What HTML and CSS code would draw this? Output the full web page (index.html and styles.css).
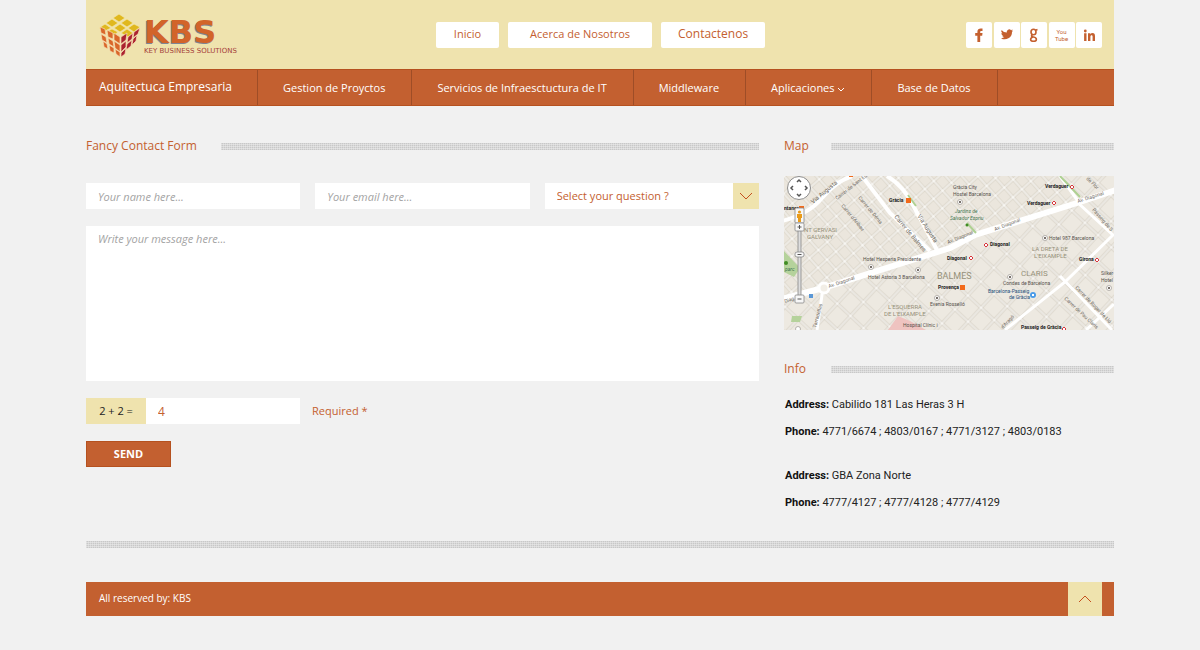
FILE: index.html
```html
<!DOCTYPE html>
<html lang="es">
<head>
<meta charset="utf-8">
<meta name="viewport" content="width=device-width, initial-scale=1">
<title>KBS - Key Business Solutions</title>
<link rel="stylesheet" href="styles.css">
</head>
<body>
<div class="page">
  <header class="header">
    <a class="logo" href="#">
      <svg class="logo-cube" viewBox="0 0 42 44" aria-hidden="true">
        <g fill="#e0b81f" stroke="#f3e6ae" stroke-width="0.7">
          <path d="M20 1l6 4-6 4-6-4zM13 6l6 4-6 4-6-4zM28 6l6 4-6 4-6-4zM6 11l6 4-6 3-6-3zM21 11l6 4-6 4-6-4zM35 11l6 3-6 5-6-4zM13 16l6 3-5 4-7-4zM28 16l6 4-5 4-7-4z"/>
        </g>
        <g fill="#d9672a" stroke="#f6dfb4" stroke-width="0.7">
          <path d="M1 14l5 2 1 6-5-2zM8 17l6 3v6l-5-2zM15 20l6 4v7l-6-4zM2 21l5 3 1 6-5-3zM9 25l5 3 1 6-5-3zM15 28l6 4v7l-5-4zM4 28l4 3 1 5-4-2zM10 32l5 3v5l-4-2zM16 36l5 3v5l-4-3z"/>
        </g>
        <g fill="#ab2230" stroke="#f6dfb4" stroke-width="0.7">
          <path d="M22 24l6-4-1 7-5 4zM29 24l5-4-1 6-5 4zM35 19l6-4-2 6-5 4zM22 32l5-4v6l-5 5zM28 31l5-4-1 6-5 4zM34 26l4-4-1 6-4 4zM22 40l5-5-1 6-4 3z"/>
        </g>
      </svg>
      <span class="logo-words">
        <span class="logo-name">KBS</span>
        <span class="logo-tag">KEY BUSINESS SOLUTIONS</span>
      </span>
    </a>
    <nav class="top-nav" aria-label="Principal">
      <a href="#">Inicio</a>
      <a href="#" class="wide">Acerca de Nosotros</a>
      <a href="#" class="current">Contactenos</a>
    </nav>
    <div class="social">
      <a href="#" aria-label="Facebook"><svg viewBox="0 0 26 26"><path d="M11.400 20v-6.300H9.200v-2.600h2.200V9.700C11.400 7.400 12.800 6.500 14.800 6.500h1.700v2.600h-1.200c-.8 0-1.100.4-1.100 1.100v.9h2.300l-.3 2.600h-2V20z"/></svg></a>
      <a href="#" aria-label="Twitter"><svg viewBox="0 0 26 26"><path d="M19 8.600a5 5 0 0 1-1.400.4 2.500 2.500 0 0 0 1-1.400 5 5 0 0 1-1.500.6 2.500 2.500 0 0 0-4.300 2.300 7 7 0 0 1-5.200-2.600 2.500 2.500 0 0 0 .8 3.300 2.500 2.500 0 0 1-1.100-.3 2.500 2.500 0 0 0 2 2.500 2.500 2.500 0 0 1-1.200 0 2.500 2.500 0 0 0 2.300 1.700A5 5 0 0 1 7 16.200a7.200 7.200 0 0 0 11-6.300 5 5 0 0 0 1-1.300z"/></svg></a>
      <a href="#" aria-label="Google"><svg class="line-icon" viewBox="0 0 26 26"><ellipse cx="12.500" cy="10" rx="2.500" ry="2.700"/><path d="M14.500 8.200l2-.7M11.500 12.500c-2 1.500-.8 2.200 1 2.500 4 .7 3.600 4.300.1 4.300-4 0-3.700-3.500-.6-4.300"/></svg></a>
      <a href="#" aria-label="YouTube" class="youtube"><span>You</span><span>Tube</span></a>
      <a href="#" aria-label="LinkedIn"><svg viewBox="0 0 26 26"><circle cx="9.300" cy="9" r="1.400"/><path d="M8.100 11.300h2.400V19H8.100zM12 11.300h2.300v1c.5-.8 1.300-1.200 2.200-1.200 1.800 0 2.500 1.200 2.500 3.200V19h-2.400v-4.300c0-1-.3-1.500-1-1.500-.8 0-1.200.6-1.200 1.600V19H12z"/></svg></a>
    </div>
  </header>

  <nav class="main-nav" aria-label="Servicios">
    <a href="#" class="lead">Aquitectuca Empresaria</a>
    <a href="#">Gestion de Proyctos</a>
    <a href="#">Servicios de Infraesctuctura de IT</a>
    <a href="#">Middleware</a>
    <a href="#">Aplicaciones <svg class="caret" viewBox="0 0 8 5" aria-hidden="true"><path d="M1 1l3 3 3-3"/></svg></a>
    <a href="#">Base de Datos</a>
  </nav>

  <main class="content">
    <section>
      <div class="title"><h2>Fancy Contact Form</h2><span class="dots"></span></div>
      <form class="form">
        <div class="fields">
          <input class="box" type="text" placeholder="Your name here..." aria-label="Your name">
          <input class="box" type="email" placeholder="Your email here..." aria-label="Your email">
          <div class="select">
            <select class="box" aria-label="Select your question"><option>Select your question ?</option></select>
            <span class="select-arrow"><svg viewBox="0 0 14 8" aria-hidden="true"><path d="M1 1l6 6 6-6"/></svg></span>
          </div>
        </div>
        <textarea class="box message" placeholder="Write your message here..." aria-label="Your message"></textarea>
        <div class="check">
          <div class="sum"><label for="sum">2 + 2 =</label><input class="box" id="sum" type="text" value="4"></div>
          <span class="required">Required *</span>
        </div>
        <button class="send" type="submit">SEND</button>
      </form>
    </section>

    <aside>
      <div class="title"><h2>Map</h2><span class="dots"></span></div>
      <svg class="map" viewBox="0 0 330 154" role="img" aria-label="Map of Barcelona">
        <defs>
          <pattern id="small" width="12" height="13" patternUnits="userSpaceOnUse" patternTransform="rotate(-42)">
            <rect width="12" height="13" fill="#fcfbf8"/><rect x="1" y="1" width="10" height="11" fill="#ebe6dd" stroke="#cbc4b7" stroke-width="0.6"/>
          </pattern>
          <pattern id="large" width="19" height="18" patternUnits="userSpaceOnUse" patternTransform="rotate(-47)">
            <rect width="19" height="18" fill="#fcfbf8"/><rect x="1" y="1" width="17" height="16" fill="#ede9e1" stroke="#cbc4b7" stroke-width="0.7"/>
          </pattern>
        </defs>
        <rect width="330" height="154" fill="url(#large)"/>
        <path d="M0 0h275l18 26L39 112 0 122z" fill="url(#small)"/>
        <path d="M0 75l16 17-6 9-10-5z" fill="#b5d29b"/>
        <path d="M8 140h10l-2 6H7z" fill="#b5d29b"/>
        <path d="M104 154l10-14 12 5 16 9z" fill="#efc3c0"/>
        <g fill="none" stroke="#fff" stroke-width="4">
          <path d="M-2 45Q25 38 38 22T68 0"/>
          <path d="M78 0l28 37 40 38"/>
          <path d="M103 0Q120 10 130 31l23 43"/>
          <path d="M39 112l-6 42M330 58l-49 48-60 48M276 100l52 54M293 26l37 34M276 0l18 25M330 128l-28 26" stroke-width="3"/>
          <path d="M-2 123l41-11L166 72l25-13L293 27l39-13" stroke-width="6"/>
        </g>
        <circle cx="40" cy="112" r="5" fill="#f2eee6" stroke="#fff" stroke-width="3"/>
        <g stroke="#aed092" stroke-width="2"><path d="M124 19l8 11M276 0l20 21M183 47l9 10"/></g>
        <g class="map-area">
          <text x="20" y="56">NT GERVASI</text><text x="23" y="63">GALVANY</text>
          <text x="104" y="133">L'ESQUERRA</text><text x="100" y="140">DE L'EIXAMPLE</text>
          <text x="248" y="75">LA DRETA DE</text><text x="250" y="82">L'EIXAMPLE</text>
          <text x="153" y="103" class="big">BALMES</text><text x="237" y="100" class="mid">CLARIS</text>
        </g>
        <g class="map-road">
          <text transform="translate(29 28) rotate(-40)">Via Augusta</text>
          <text class="minor" transform="translate(53 24) rotate(-38)">Carrer de Sant Eus</text>
          <text class="minor" transform="translate(57 30) rotate(50)">Carrer d'Aribau</text>
          <text class="minor" transform="translate(74 22) rotate(50)">Carrer de Dénia</text>
          <text transform="translate(110 41) rotate(50)">Carrer de Balmes</text>
          <text transform="translate(133 40) rotate(57)">Via Augusta</text>
          <text class="minor" transform="translate(45 112) rotate(-19)">Av. Diagonal</text>
          <text class="minor" transform="translate(164 68) rotate(-22)">Av. Diagonal</text>
          <text class="minor" transform="translate(211 55) rotate(-21)">Av. Diagonal</text>
          <text class="minor" transform="translate(294 27) rotate(-18)">Av. Diagonal</text>
          <text class="minor" transform="translate(308 34) rotate(49)">Passeig de S</text>
          <text class="minor" transform="translate(291 112) rotate(46)">Carrer de Roger de Llú</text>
          <text class="minor" transform="translate(280 123) rotate(43)">Carrer de Pau Claris</text>
          <text class="minor" transform="translate(219 153) rotate(-47)">d'Aragó</text>
          <text class="minor" transform="translate(32 152) rotate(-75)">Tarradellas</text>
          <text class="minor" transform="translate(302 3) rotate(45)">de Flor</text>
          <text class="minor" transform="translate(1 127) rotate(-18)">Diag</text>
        </g>
        <g class="map-place">
          <text x="79" y="85">Hotel Hesperia Presidente</text><text x="84" y="103">Hotel Astoria 3 Barcelona</text>
          <text x="146" y="130">Evenia Rosselló</text><text x="119" y="151">Hospital Clínic i</text>
          <text x="169" y="13">Gràcia City</text><text x="169" y="20">Hostel Barcelona</text>
          <text x="265" y="64">Hotel 987 Barcelona</text><text x="219" y="109">Condes de Barcelona</text>
          <text x="317" y="99">Silker</text><text x="317" y="106">Hotel</text>
        </g>
        <g class="map-stop">
          <text x="105" y="26">Gràcia</text><text x="0" y="34">ntaner</text>
          <text x="261" y="12">Verdaguer</text><text x="243" y="29">Verdaguer</text>
          <text x="206" y="70">Diagonal</text><text x="163" y="84">Diagonal</text>
          <text x="295" y="85">Girona</text><text x="154" y="113">Provença</text>
          <text x="237" y="153">Passeig de Gràcia</text>
        </g>
        <g class="map-blue"><text x="204" y="117">Barcelona-Passeig</text><text x="225" y="123">de Gràcia</text></g>
        <g class="map-park"><text x="171" y="37">Jardins de</text><text x="166" y="44">Salvador Espriu</text><text x="1" y="95">parc</text></g>
        <g fill="#f26a1b"><rect x="122" y="22" width="5" height="5"/><rect x="176" y="109" width="5" height="5"/><rect x="15" y="30" width="5" height="4"/><rect x="65" y="0" width="4" height="1"/></g>
        <g fill="#fff" stroke="#d8343c" stroke-width="1"><path d="M286 11l2-2 2 2-2 2zM268 27l2-2 2 2-2 2zM200 69l2-2 2 2-2 2zM185 82l2-2 2 2-2 2zM311 84l2-2 2 2-2 2zM278 153l2-2 2 2-2 2z"/></g>
        <g fill="#fff" stroke="#9b9690" stroke-width="0.7"><circle cx="87" cy="91" r="2.500"/><circle cx="134" cy="94" r="2.500"/><circle cx="153" cy="122" r="2.500"/><circle cx="176" cy="26" r="2.500"/><circle cx="261" cy="62" r="2.500"/><circle cx="226" cy="101" r="2.500"/><circle cx="325" cy="112" r="2.500"/><circle cx="14" cy="153" r="2.500"/></g>
        <g fill="#77706a"><path d="M86 90h2v2h-2zM133 93h2v2h-2zM152 121h2v2h-2zM175 25h2v2h-2zM260 61h2v2h-2zM225 100h2v2h-2zM324 111h2v2h-2z"/></g>
        <circle cx="183" cy="49" r="1.500" fill="#408c24"/><circle cx="2" cy="87" r="2" fill="#408c24"/>
        <circle cx="249" cy="119" r="3" fill="#4a9be8"/><path d="M248 118h2v2h-2z" fill="#fff"/><rect x="25" y="118" width="4" height="4" fill="#5a97d6"/>
        <circle cx="15" cy="12" r="11.500" fill="#fff" stroke="#8d8d8d"/>
        <path d="M13 6l2-2 2 2M13 18l2 2 2-2M9 10l-2 2 2 2M21 10l2 2-2 2" fill="none" stroke="#555" stroke-width="1.500"/>
        <rect x="14" y="52" width="3" height="68" fill="#ddd" stroke="#888" stroke-width="0.800"/>
        <g fill="#f7f7f7" stroke="#888" stroke-width="0.800"><rect x="11" y="32" width="9" height="15" rx="1"/><rect x="11" y="47" width="9" height="8" rx="1"/><rect x="11" y="76" width="9" height="5" rx="2"/><rect x="11" y="119" width="9" height="8" rx="1"/></g>
        <path d="M13.500 51h4M15.500 49v4M13.500 78.500h4M13.500 123h4" stroke="#555"/>
        <circle cx="15.500" cy="36" r="1.600" fill="#e99b1a"/><path d="M13 38h5v4h-1v4h-3v-4h-1z" fill="#e99b1a"/>
      </svg>

      <div class="title info-title"><h2>Info</h2><span class="dots"></span></div>
      <address class="info">
        <p><b>Address:</b> Cabilido 181 Las Heras 3 H</p>
        <p><b>Phone:</b> 4771/6674 ; 4803/0167 ; 4771/3127 ; 4803/0183</p>
      </address>
      <address class="info">
        <p><b>Address:</b> GBA Zona Norte</p>
        <p><b>Phone:</b> 4777/4127 ; 4777/4128 ; 4777/4129</p>
      </address>
    </aside>
  </main>

  <div class="dots divider"></div>
  <footer class="footer">
    <span class="rights">All reserved by: KBS</span>
    <a class="to-top" href="#" aria-label="Back to top"><svg viewBox="0 0 14 8" aria-hidden="true"><path d="M1 7l6-6 6 6"/></svg></a>
  </footer>
</div>
</body>
</html>
```
FILE: styles.css
```css
* { box-sizing: border-box; }

body {
  margin: 0;
  background: #f1f1f1;
  color: #222;
  font: 11px/18px "Open Sans", "Noto Sans", sans-serif;
}

a { color: inherit; text-decoration: none; }
h2, p { margin: 0; }

.page { max-width: 1028px; margin: 0 auto; }

.header {
  display: grid;
  grid-template-columns: 1fr auto 1fr;
  align-items: center;
  height: 69px;
  padding: 0 12px 0 13px;
  background: #efe3ae;
}

.logo { display: flex; align-items: center; gap: 3px; }
.logo-cube { flex: none; width: 42px; height: 44px; }
.logo-words { display: flex; flex-direction: column; padding-top: 3px; white-space: nowrap; }
.logo-name {
  color: #d2642a;
  font: bold 32px/28px "DejaVu Sans", sans-serif;
  text-shadow: -1px 1px 0 #7f8594;
}
.logo-tag {
  margin-top: 1px;
  color: #a5403a;
  font: 7px/8px "DejaVu Sans", sans-serif;
}

.top-nav { display: flex; gap: 9px; }
.top-nav a {
  padding: 3px 18px 5px;
  border-radius: 2px;
  background: #fff;
  color: #c4602f;
}
.top-nav .wide { padding: 3px 22px 5px; }
.top-nav .current { padding: 3px 17px 5px; font-size: 12px; }

.social { display: flex; justify-content: space-between; justify-self: end; width: 136px; }
.social a {
  display: flex;
  flex-direction: column;
  align-items: center;
  justify-content: center;
  width: 26px;
  height: 26px;
  border-radius: 2px;
  background: #fff;
  color: #c4602f;
}
.social svg { width: 26px; height: 26px; fill: #c4602f; }
.social .line-icon { fill: none; stroke: #c4602f; stroke-width: 1.6; }
.social .youtube { font: 6px/7px "Roboto", sans-serif; }

.main-nav {
  display: flex;
  background: #c36030;
  border-top: 1px solid #b5511f;
  border-bottom: 1px solid #b5511f;
  color: #fff;
}
.main-nav a {
  padding: 9px 26px 8px 25px;
  border-right: 1px solid #9e4d27;
}
.main-nav .lead { padding: 8px 25px 9px 13px; font-size: 12px; }
.caret { width: 8px; height: 5px; fill: none; stroke: #fff; }

.content {
  display: grid;
  grid-template-columns: minmax(0, 1fr) 330px;
  gap: 25px;
  padding-top: 31px;
}

.title { display: flex; align-items: center; gap: 24px; }
.title h2 {
  color: #c4602f;
  font-size: 12px;
  font-weight: 400;
  line-height: 18px;
}
aside .title { gap: 22px; }
aside h2 { min-width: 25px; }
.dots {
  flex: 1;
  height: 7px;
  background:
    repeating-linear-gradient(90deg, #f1f1f166 0 1px, transparent 1px 2px),
    repeating-linear-gradient(#c8c8c8 0 1px, #dcdcdc 1px 2px);
}

.form { display: flex; flex-direction: column; gap: 17px; margin-top: 28px; }
.fields { display: grid; grid-template-columns: repeat(3, minmax(0, 1fr)); gap: 15px; }
.box {
  display: block;
  width: 100%;
  height: 26px;
  margin: 0;
  padding: 0 12px;
  border: 0;
  border-radius: 0;
  background: #fff;
  color: #c4602f;
  font: inherit;
}
.box::placeholder { color: #a3a3a3; font-style: italic; opacity: 1; }
.select { display: flex; }
.select .box { flex: 1; width: auto; min-width: 0; appearance: none; }
.select-arrow {
  display: flex;
  align-items: center;
  justify-content: center;
  width: 26px;
  background: #efe3ae;
}
.select-arrow svg, .to-top svg { width: 14px; height: 8px; fill: none; stroke: #c4501f; }
.message { height: 155px; padding-top: 4px; resize: none; }

.check { display: flex; gap: 12px; align-items: center; }
.sum { display: flex; width: 214px; }
.sum label {
  flex: none;
  width: 60px;
  background: #efe3ae;
  line-height: 26px;
  text-align: center;
}
.sum .box { font-size: 12px; }
.required { color: #c4602f; }
.send {
  align-self: flex-start;
  width: 85px;
  height: 26px;
  padding: 0;
  border: 1px solid #b5511f;
  background: #c36030;
  color: #fff;
  font: bold 11px/18px "Open Sans", sans-serif;
}

.map { display: block; width: 100%; margin-top: 21px; font-family: "Roboto", sans-serif; font-size: 5px; }
.map-area { fill: #96917a; font-size: 6px; }
.map-area .big { font-size: 9px; }
.map-area .mid { font-size: 8px; }
.map-road { fill: #6d6860; font-size: 6px; }
.map-road .minor { font-size: 5px; }
.map-place { fill: #57524d; }
.map-stop { fill: #222; font-weight: 700; }
.map-blue { fill: #24507c; }
.map-park { fill: #3f7550; font-style: italic; }

.info-title { margin-top: 30px; }
.info {
  margin-top: 18px;
  padding-left: 1px;
  color: #222;
  font: 11px/18px "Roboto", sans-serif;
}
.info + .info { margin-top: 26px; }
.info p + p { margin-top: 9px; }
.info b { color: #111; }

.divider { margin-top: 29px; }
.footer {
  display: flex;
  align-items: center;
  justify-content: space-between;
  height: 34px;
  margin-top: 34px;
  padding: 0 12px 0 13px;
  background: #c36030;
  color: #fff;
}
.rights { padding-bottom: 2px; font-size: 10px; }
.to-top {
  display: flex;
  align-items: center;
  justify-content: center;
  width: 34px;
  height: 34px;
  background: #efe3ae;
}
```
